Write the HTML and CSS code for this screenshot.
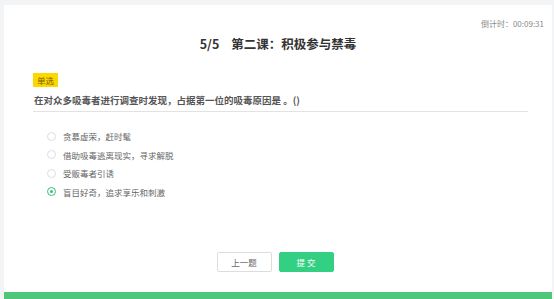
FILE: index.html
```html
<!DOCTYPE html>
<html lang="zh">
<head>
  <meta charset="UTF-8" />
  <title>考试</title>
  <link rel="stylesheet" href="styles.css">
</head>
<body>
  <main class="paper">
    <div class="timer">倒计时：00:09:31</div>
    <h1 class="title"><span class="count">5/5</span>第二课：积极参与禁毒</h1>

    <section class="question">
      <span class="tag">单选</span>
      <p class="stem">在对众多吸毒者进行调查时发现，占据第一位的吸毒原因是 。()</p>
      <ul class="options">
        <li><span class="radio"></span>贪慕虚荣，赶时髦</li>
        <li><span class="radio"></span>借助吸毒逃离现实，寻求解脱</li>
        <li><span class="radio"></span>受贩毒者引诱</li>
        <li class="checked"><span class="radio"></span>盲目好奇，追求享乐和刺激</li>
      </ul>
    </section>

    <div class="actions">
      <button class="btn">上一题</button>
      <button class="btn primary">提 交</button>
    </div>
    <div class="progress"></div>
  </main>
</body>
</html>
```

FILE: styles.css
```css
body {
  margin: 0;
  height: 299px;
  overflow: hidden;
  background-color: #f3f4f6;
  font-family: "Noto Sans CJK SC", "Noto Sans", sans-serif;
  padding: 5px 2px 0 4px;
  box-sizing: border-box;
}

.paper {
  background-color: #fff;
  height: 294px;
  display: flex;
  flex-direction: column;
  position: relative;
}

.timer {
  text-align: right;
  font-size: 8px;
  color: #8a8a8a;
  padding: 13px 8px 0 0;
  line-height: 12px;
}

.title {
  margin: 5px 0 0;
  text-align: center;
  font-size: 12.5px;
  font-weight: 700;
  color: #333;
  line-height: 17px;
}

.count {
  margin-right: 12px;
}

.question {
  margin: 13px 24px 0 29px;
}

.tag {
  display: inline-block;
  background-color: #fcd800;
  color: #7a6000;
  font-size: 8.5px;
  line-height: 14px;
  padding: 0 4px;
}

.stem {
  margin: 4px 0 0;
  padding: 0 0 4px 1px;
  font-size: 9.5px;
  font-weight: 700;
  color: #555;
  line-height: 14px;
  border-bottom: 1px solid #e2e2e2;
}

.options {
  list-style: none;
  margin: 15px 0 0 14px;
  padding: 0;
}

.options li {
  display: flex;
  align-items: center;
  font-size: 8.5px;
  color: #666;
  height: 18.5px;
}

.radio {
  width: 7px;
  height: 7px;
  border: 1px solid #ddd;
  border-radius: 50%;
  margin-right: 7px;
  box-sizing: content-box;
  position: relative;
}

.checked .radio {
  border-color: #2fc47d;
}

.checked .radio::after {
  content: "";
  position: absolute;
  left: 2px;
  top: 2px;
  width: 3px;
  height: 3px;
  border-radius: 50%;
  background-color: #2fc47d;
}

.actions {
  margin-top: auto;
  display: flex;
  justify-content: center;
  gap: 7px;
  padding-bottom: 20px;
  padding-right: 6px;
}

.btn {
  width: 55px;
  height: 20px;
  font-family: inherit;
  font-size: 8.5px;
  border: 1px solid #ddd;
  border-radius: 2px;
  background-color: #fff;
  color: #666;
  padding: 0;
}

.btn.primary {
  background-color: #33d083;
  border-color: #33d083;
  color: #fff;
}

.progress {
  height: 7px;
  background-color: #4ec77a;
}
```
